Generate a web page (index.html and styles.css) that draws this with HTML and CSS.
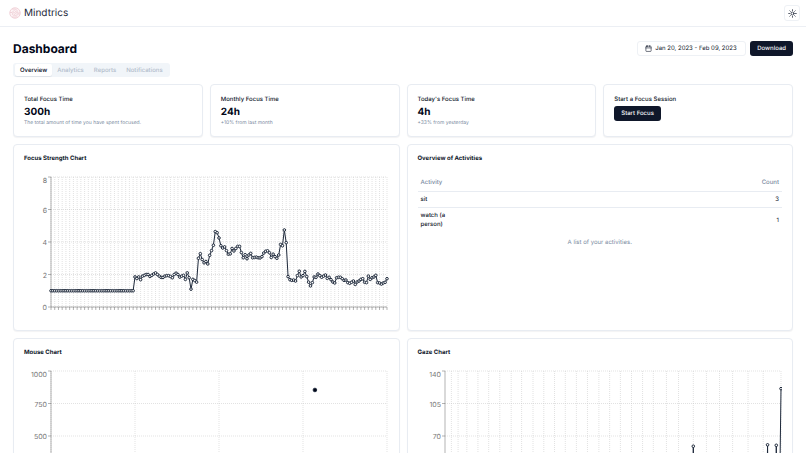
FILE: index.html
```html
<!DOCTYPE html>
<html lang="en">
<head>
    <meta charset="UTF-8">
    <meta name="viewport" content="width=device-width, initial-scale=1.0">
    <title>Mindtrics</title>
    <link rel="stylesheet" href="styles.css">
</head>
<body>
    <header class="topbar">
        <a class="brand" href="#">
            <svg class="brand-logo" viewBox="0 0 24 24" aria-hidden="true">
                <circle cx="12" cy="12" r="10.5"/>
                <path d="M2 11h4c2 0 2-4 5-4s3 3 1 4-4 0-5 2 1 4 4 4"/>
                <path d="M7 5c3-2 8-1 9 2s-1 4 1 5 4-1 5-1M22 14h-4c-2 0-2 3-5 3s-2-3 0-4 3-1 3-3M7 19c2 2 8 2 10-1"/>
            </svg>
            <span>Mindtrics</span>
        </a>
        <button class="btn btn-icon" type="button" aria-label="Toggle theme">
            <svg class="icon" viewBox="0 0 24 24" aria-hidden="true">
                <circle cx="12" cy="12" r="4"/>
                <path d="M12 2v2M12 20v2M4.9 4.9l1.4 1.4M17.7 17.7l1.4 1.4M2 12h2M20 12h2M6.3 17.7l-1.4 1.4M19.1 4.9l-1.4 1.4"/>
            </svg>
        </button>
    </header>

    <main class="page">
        <div class="page-head">
            <h1>Dashboard</h1>
            <div class="actions">
                <button class="btn btn-outline date-btn" type="button">
                    <svg class="icon" viewBox="0 0 24 24" aria-hidden="true">
                        <rect x="3" y="4" width="18" height="18" rx="2"/>
                        <path d="M16 2v4M8 2v4M3 10h18"/>
                    </svg>
                    Jan 20, 2023 - Feb 09, 2023
                </button>
                <button class="btn btn-primary" type="button">Download</button>
            </div>
        </div>

        <div class="tabs" role="tablist">
            <button class="tab active" type="button" role="tab" aria-selected="true">Overview</button>
            <button class="tab" type="button" role="tab" disabled>Analytics</button>
            <button class="tab" type="button" role="tab" disabled>Reports</button>
            <button class="tab" type="button" role="tab" disabled>Notifications</button>
        </div>

        <div class="stats">
            <section class="card stat">
                <h3>Total Focus Time</h3>
                <div class="value">300h</div>
                <p>The total amount of time you have spent focused.</p>
            </section>
            <section class="card stat">
                <h3>Monthly Focus Time</h3>
                <div class="value">24h</div>
                <p>+10% from last month</p>
            </section>
            <section class="card stat">
                <h3>Today's Focus Time</h3>
                <div class="value">4h</div>
                <p>+33% from yesterday</p>
            </section>
            <section class="card stat">
                <h3>Start a Focus Session</h3>
                <button class="btn btn-primary" type="button">Start Focus</button>
            </section>
        </div>

        <div class="panels">
            <section class="card panel">
                <h2>Focus Strength Chart</h2>
                <svg class="chart" id="focusChart" role="img" aria-label="Focus Strength Chart"></svg>
            </section>
            <section class="card panel">
                <h2>Overview of Activities</h2>
                <table class="activities">
                    <caption>A list of your activities.</caption>
                    <thead>
                        <tr><th class="name">Activity</th><th class="count">Count</th></tr>
                    </thead>
                    <tbody>
                        <tr><td class="name">sit</td><td class="count">3</td></tr>
                        <tr><td class="name">watch (a person)</td><td class="count">1</td></tr>
                    </tbody>
                </table>
            </section>
            <section class="card panel">
                <h2>Mouse Chart</h2>
                <svg class="chart" id="mouseChart" role="img" aria-label="Mouse Chart"></svg>
            </section>
            <section class="card panel">
                <h2>Gaze Chart</h2>
                <svg class="chart" id="gazeChart" role="img" aria-label="Gaze Chart"></svg>
            </section>
        </div>
    </main>

    <script src="charts.js"></script>
</body>
</html>
```
FILE: styles.css
```css
* {
    box-sizing: border-box;
}

body {
    margin: 0;
    font-family: Inter, "Liberation Sans", sans-serif;
    font-size: 6px;
    line-height: 9px;
    color: #0f172a;
    background: #fff;
    text-rendering: geometricPrecision;
}

h1, h2, h3, p {
    margin: 0;
}

button {
    font: inherit;
    color: inherit;
    cursor: pointer;
    text-rendering: inherit;
}

.topbar {
    display: flex;
    align-items: center;
    justify-content: space-between;
    height: 27px;
    padding: 0 6px 0 9px;
    border-bottom: 1px solid #eceff4;
}

.brand {
    display: flex;
    align-items: center;
    gap: 3px;
    font-size: 10px;
    line-height: 14px;
    color: #1e293b;
    text-decoration: none;
}

.brand-logo {
    width: 12px;
    height: 12px;
    fill: #fdf3f5;
    stroke: #f1d3d9;
    stroke-width: 2;
}

.icon {
    width: 7px;
    height: 7px;
    fill: none;
    stroke: currentColor;
    stroke-width: 2;
    stroke-linecap: round;
    stroke-linejoin: round;
}

.btn {
    display: inline-flex;
    align-items: center;
    height: 15px;
    padding: 0 7px;
    border: 1px solid transparent;
    border-radius: 3px;
    font-weight: 500;
    white-space: nowrap;
}

.btn-primary {
    padding: 0 6px;
    color: #f8fafc;
    background: #0f172a;
}

.btn-outline, .btn-icon {
    background: #fff;
    border-color: #eef1f5;
}

.btn-icon {
    justify-content: center;
    width: 16px;
    height: 16px;
    padding: 0;
}

.btn-icon .icon {
    width: 9px;
    height: 9px;
}

.page {
    padding: 14px 13px;
}

.page-head {
    display: flex;
    align-items: center;
    justify-content: space-between;
}

.page-head h1 {
    font-size: 12px;
    line-height: 15px;
    font-weight: 700;
    color: #020617;
}

.actions {
    display: flex;
    gap: 4px;
}

.date-btn {
    gap: 3px;
    min-width: 109px;
    font-weight: 400;
}

.tabs {
    display: flex;
    width: fit-content;
    margin-top: 7px;
    padding: 1px 2px;
    border-radius: 3px;
    background: #f1f5f9;
}

.tab {
    height: 12px;
    padding: 0 5px;
    border: 0;
    border-radius: 2px;
    background: none;
    font-weight: 500;
    color: #b2bccb;
}

.tab.active {
    color: #020617;
    background: #fff;
    box-shadow: 0 1px 1px rgba(15, 23, 42, 0.08);
}

.card {
    border: 1px solid #e8ecf2;
    border-radius: 4px;
    background: #fff;
    box-shadow: 0 1px 1px rgba(15, 23, 42, 0.05);
}

.stats {
    display: grid;
    grid-template-columns: repeat(4, 1fr);
    gap: 7px;
    margin-top: 7px;
}

.stat {
    padding: 10px 10px 9px;
}

.stat h3 {
    margin-bottom: 2px;
    font-size: 6px;
    line-height: 9px;
    font-weight: 500;
}

.value {
    font-size: 10px;
    line-height: 13px;
    font-weight: 700;
    color: #020617;
}

.stat p {
    font-size: 5px;
    line-height: 8px;
    color: #7b8ba1;
}

.panels {
    display: grid;
    grid-template-columns: repeat(2, 1fr);
    gap: 7px;
    margin-top: 7px;
}

.panel {
    padding: 9px 10px;
}

.panel h2 {
    font-size: 6px;
    line-height: 9px;
    font-weight: 700;
}

.chart {
    display: block;
    width: 100%;
    height: 154px;
    margin-top: 4px;
}

.grid line {
    stroke: #c4c4c4;
    stroke-width: 0.5;
    stroke-dasharray: 1 1;
}

.axis line {
    stroke: #666;
    stroke-width: 0.5;
}

.axis text {
    font-size: 7px;
    fill: #777;
    text-anchor: end;
}

.series {
    fill: none;
    stroke: #1e293b;
    stroke-width: 1;
}

.dot {
    fill: #fff;
    stroke: #1e293b;
    stroke-width: 1;
}

.dot.solid {
    fill: #020617;
}

.activities {
    width: 100%;
    margin-top: 11px;
    border-collapse: collapse;
}

.activities caption {
    caption-side: bottom;
    padding-top: 6px;
    color: #7b8ba1;
}

.activities th, .activities td {
    padding: 3px;
    text-align: left;
}

.activities th {
    padding: 4px 3px;
    font-weight: 500;
    color: #7b8ba1;
}

.activities tr {
    border-bottom: 1px solid #e8ecf2;
}

.activities tbody tr:last-child {
    border-bottom: 0;
}

.activities .name {
    width: 40px;
    font-weight: 500;
}

.activities .count {
    text-align: right;
}
```
FILE: charts.js
```js
const SVG_NS = 'http://www.w3.org/2000/svg';

// plot area inside each svg
const MARGIN = { top: 10, right: 2, bottom: 14, left: 27 };

const focusData = Array(45).fill(1).concat([
    1.85, 1.75, 1.85, 1.68, 1.9, 1.95, 2, 2, 1.88, 1.95, 2.03, 2.1, 2, 1.9, 1.82,
    1.82, 1.9, 1.93, 1.93, 1.88, 1.8, 2, 2.08, 2, 1.84, 1.9, 1.95, 1.7, 2.1, 1.8,
    1.1, 1.7, 1.63, 1.53, 3, 3.28, 2.92, 2.72, 2.8, 2.65, 3.18, 3.47, 3.8, 4.64,
    4.57, 4.25, 3.77, 3.63, 3.7, 3.47, 3.25, 3.27, 3.6, 3.45, 3.6, 3.73, 3.73,
    3.35, 3.03, 3.22, 2.97, 3.2, 3.3, 3.03, 3.05, 3.07, 3.03, 3.02, 3.1, 3.32,
    3.43, 3.46, 3.34, 3.05, 3.25, 3.1, 3, 3.2, 3.85, 3.77, 4.74, 3.96, 1.87, 1.68,
    1.64, 1.66, 1.6, 1.93, 2.2, 1.85, 1.93, 2.19, 1.87, 1.53, 1.3, 1.5, 1.85, 1.83,
    2.03, 1.93, 1.83, 1.9, 1.97, 1.76, 1.83, 1.68, 1.54, 1.48, 1.8, 1.83, 1.83,
    1.74, 1.64, 1.66, 1.5, 1.46, 1.52, 1.6, 1.39, 1.54, 1.6, 1.7, 1.74, 1.52, 1.5,
    1.9, 1.7, 1.8, 1.85, 1.95, 1.5, 1.48, 1.41, 1.48, 1.52, 1.74
]);

// [position in the session, gaze offset]
const gazeData = [
    [0, 4], [60, 9], [140, 6], [230, 12], [330, 7], [430, 14], [520, 8], [620, 11],
    [700, 6], [737, 5], [739, 59], [741, 6], [800, 12], [880, 9], [958, 7],
    [960, 60.5], [962, 8], [984, 6], [986, 60], [988, 7], [996, 9], [1000, 121]
];

const gazeTicks = [
    19, 39, 65, 98, 130, 163, 197, 228, 262, 294, 326, 358, 391, 424, 458, 490, 522,
    555, 588, 620, 659, 695, 739, 778, 817, 856, 902, 947, 1000
];

function add(parent, name, attrs, text) {
    const el = document.createElementNS(SVG_NS, name);
    for (const key in attrs) {
        el.setAttribute(key, attrs[key]);
    }
    if (text !== undefined) {
        el.textContent = text;
    }
    parent.appendChild(el);
    return el;
}

function drawChart(id, options) {
    const svg = document.getElementById(id);
    svg.textContent = '';
    const right = svg.clientWidth - MARGIN.right;
    const bottom = svg.clientHeight - MARGIN.bottom;
    const x = v => MARGIN.left + v / options.maxX * (right - MARGIN.left);
    const y = v => bottom - v / options.maxY * (bottom - MARGIN.top);

    const grid = add(svg, 'g', { class: 'grid' });
    const axis = add(svg, 'g', { class: 'axis' });

    options.xTicks.forEach(v => {
        add(grid, 'line', { x1: x(v), x2: x(v), y1: MARGIN.top, y2: bottom });
        add(axis, 'line', { x1: x(v), x2: x(v), y1: bottom, y2: bottom + 3 });
    });
    for (let i = 0; i <= 4; i++) {
        const v = options.maxY / 4 * i;
        add(grid, 'line', { x1: MARGIN.left, x2: right, y1: y(v), y2: y(v) });
        add(axis, 'line', { x1: MARGIN.left - 3, x2: MARGIN.left, y1: y(v), y2: y(v) });
        // the top label is kept inside the plot
        add(axis, 'text', { x: MARGIN.left - 4, y: y(v) + (i === 4 ? 6 : 3) }, v);
    }
    add(axis, 'line', { x1: MARGIN.left, x2: MARGIN.left, y1: MARGIN.top, y2: bottom });
    add(axis, 'line', { x1: MARGIN.left, x2: right, y1: bottom, y2: bottom });

    if (options.line) {
        add(svg, 'polyline', {
            class: 'series',
            points: options.data.map(p => x(p[0]) + ',' + y(p[1])).join(' ')
        });
    }
    options.data.forEach(p => {
        add(svg, 'circle', {
            class: options.line ? 'dot' : 'dot solid',
            cx: x(p[0]),
            cy: y(p[1]),
            r: options.line ? 1.3 : 1.8
        });
    });
}

function drawAll() {
    drawChart('focusChart', {
        maxX: 180,
        maxY: 8,
        xTicks: Array.from({ length: 91 }, (_, i) => i * 2),
        data: focusData.map((v, i) => [i, v]),
        line: true
    });
    drawChart('mouseChart', {
        maxX: 2000,
        maxY: 1000,
        xTicks: [0, 500, 1000, 1500, 2000],
        data: [[1571, 854]]
    });
    drawChart('gazeChart', {
        maxX: 1000,
        maxY: 140,
        xTicks: gazeTicks,
        data: gazeData,
        line: true
    });
}

window.addEventListener('resize', drawAll);
drawAll();
```
